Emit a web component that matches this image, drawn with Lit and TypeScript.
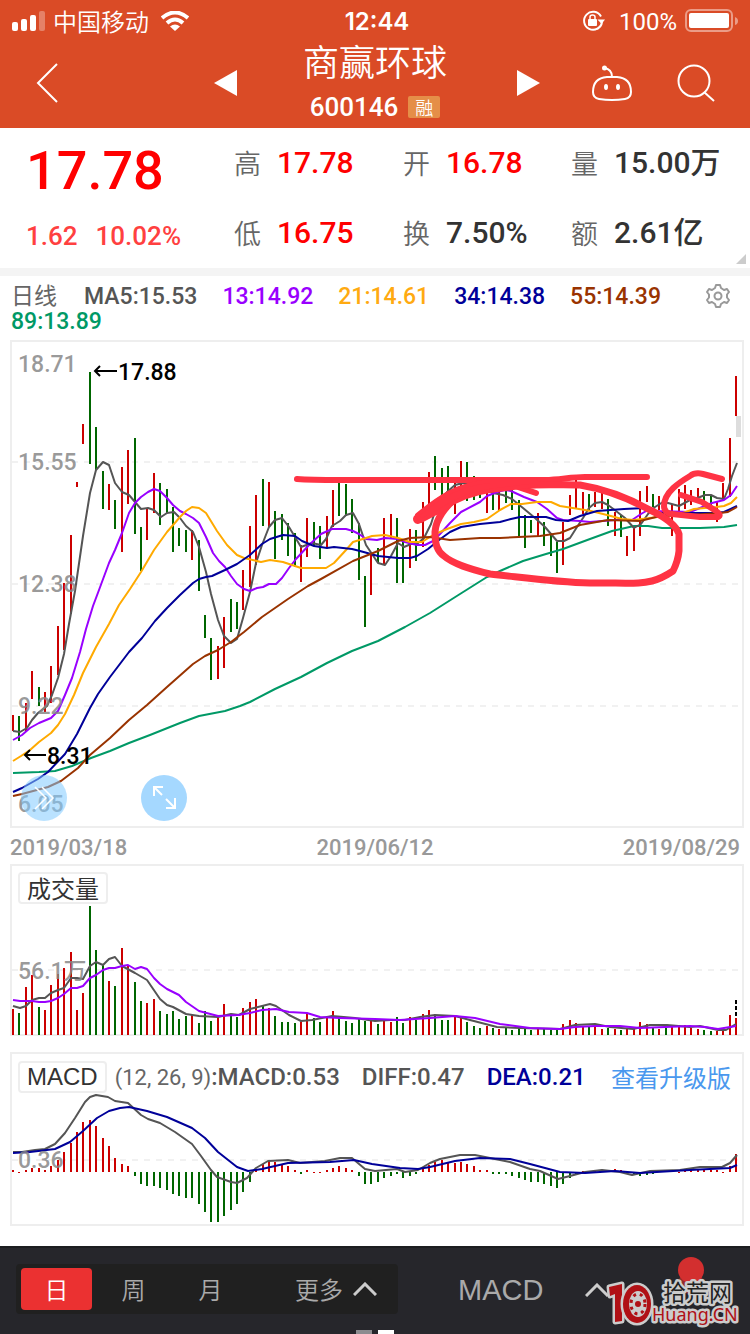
import { LitElement, html, css, svg } from "lit";
import { customElement } from "lit/decorators.js";

type Bar = [string, number, number, number];

// Trading days: direction, high y, low y, top of the volume bar
const DAYS: Bar[] = [
  ["r", 715, 731, 1009], ["g", 716, 741, 1013], ["r", 703, 732, 987], ["r", 671, 699, 975], ["g", 687, 706, 1007],
  ["r", 692, 712, 1010], ["r", 666, 703, 985], ["r", 626, 675, 974], ["r", 583, 650, 968], ["r", 535, 614, 952],
  ["r", 482, 487, 1010], ["r", 424, 444, 993], ["g", 372, 464, 906], ["g", 427, 470, 950], ["g", 471, 509, 964],
  ["r", 484, 510, 981], ["g", 500, 529, 986], ["r", 467, 552, 948], ["r", 450, 504, 966], ["g", 438, 534, 982],
  ["g", 527, 571, 1001], ["r", 509, 540, 1003], ["r", 473, 513, 999], ["g", 483, 525, 1011], ["g", 489, 513, 1014],
  ["g", 507, 552, 1011], ["g", 528, 546, 1019], ["g", 530, 552, 1016], ["r", 530, 560, 1015], ["g", 540, 591, 1023],
  ["g", 615, 638, 1011], ["g", 638, 680, 1021], ["r", 646, 679, 1018], ["r", 617, 668, 1004], ["g", 599, 632, 1016],
  ["g", 602, 629, 1017], ["r", 570, 610, 1008], ["r", 526, 587, 1002], ["r", 495, 565, 999], ["g", 479, 526, 1005],
  ["r", 482, 527, 1008], ["g", 511, 559, 1016], ["g", 514, 540, 1022], ["g", 523, 556, 1022], ["g", 533, 567, 1023],
  ["r", 545, 582, 1022], ["r", 518, 557, 1013], ["g", 522, 546, 1018], ["g", 526, 559, 1022], ["r", 516, 547, 1016],
  ["r", 490, 527, 1011], ["g", 482, 516, 1018], ["g", 484, 516, 1021], ["g", 499, 533, 1023], ["g", 523, 580, 1019],
  ["g", 576, 627, 1021], ["r", 553, 595, 1020], ["g", 548, 563, 1024], ["r", 518, 565, 1021], ["r", 514, 538, 1022],
  ["g", 518, 583, 1017], ["g", 542, 583, 1023], ["r", 529, 568, 1017], ["g", 530, 561, 1020], ["r", 502, 547, 1014],
  ["r", 472, 518, 1010], ["g", 456, 490, 1014], ["g", 468, 497, 1020], ["g", 466, 493, 1020], ["r", 482, 514, 1016],
  ["r", 461, 486, 1018], ["g", 462, 501, 1022], ["g", 476, 500, 1026], ["g", 483, 498, 1028], ["r", 490, 513, 1026],
  ["g", 490, 510, 1028], ["r", 490, 511, 1029], ["g", 488, 503, 1028], ["g", 490, 510, 1030], ["g", 500, 536, 1028],
  ["g", 515, 548, 1028], ["g", 520, 533, 1030], ["r", 513, 536, 1029], ["g", 522, 546, 1029], ["g", 533, 556, 1030],
  ["g", 542, 573, 1030], ["r", 522, 565, 1024], ["r", 495, 515, 1020], ["r", 480, 508, 1023], ["r", 492, 514, 1027],
  ["g", 494, 510, 1027], ["r", 492, 507, 1027], ["r", 493, 509, 1029], ["g", 499, 526, 1028], ["r", 512, 536, 1029],
  ["g", 515, 537, 1030], ["r", 536, 556, 1029], ["r", 527, 551, 1029], ["r", 491, 536, 1022], ["r", 486, 502, 1024],
  ["g", 494, 507, 1028], ["r", 496, 510, 1029], ["g", 505, 515, 1028], ["r", 505, 536, 1027], ["r", 489, 512, 1025],
  ["r", 485, 509, 1025], ["r", 490, 505, 1028], ["r", 488, 500, 1029], ["g", 491, 505, 1030], ["g", 495, 507, 1031],
  ["r", 502, 522, 1031], ["r", 483, 500, 1030], ["r", 438, 497, 1015], ["r", 376, 416, 1018],
];

const MACD_BARS = [
  2, -1, 2, 4, 4, 2, 6, 12, 20, 29, 40, 50, 52, 46, 34, 26, 14, 8, 6, -4, -12, -14, -14, -16, -18, -22, -24, -26, -26,
  -32, -40, -50, -50, -44, -38, -32, -20, -10, 2, 8, 11, 10, 7, 6, 2, -2, 2, -1, -1, 2, 4, 6, 4, 2, -4, -12, -12, -10,
  -6, -4, -2, -6, -4, -2, 3, 7, 10, 12, 10, 9, 10, 8, 6, 2, 2, -2, -2, -2, -4, -6, -8, -10, -10, -12, -14, -16, -12,
  -6, -2, 1, 1, 1, 1, 1, 3, 2, -2, -2, -4, -3, -2, 2, 1, 1, -1, 1, 3, 2, 2, 2, 2, -1, 6, 18,
];

const PRICE_LINES = [
  { color: "#009966", pts: "13,773 39,772 55,771 72,766 91,758 110,751 129,743 150,735 180,723 199,716 225,711 240,706 250,702 275,689 301,677 327,663 352,651 378,641 405,627 430,613 460,594 487,577 500,571 523,561 546,554 563,549 590,539 612,531 634,526 648,526 662,528 700,528 724,527 737,525" },
  { color: "#555555", pts: "13,731 20,732 27,728 32,720 38,713 47,706 52,695 58,678 64,654 69,624 75,591 83,536 90,493 96,470 103,462 109,465 115,483 122,492 129,495 135,502 141,509 148,508 154,510 161,517 167,513 174,512 180,518 186,526 193,532 199,547 206,572 211,594 218,620 224,636 231,643 237,639 243,618 250,592 256,563 262,545 269,527 275,520 282,518 289,527 301,547 312,543 321,545 326,539 332,526 340,521 346,515 353,513 359,524 366,545 378,563 385,565 391,556 398,543 404,547 411,544 417,544 424,538 431,524 437,505 447,492 455,485 463,483 475,484 487,490 493,493 503,495 512,499 523,508 535,518 545,527 557,541 564,541 570,538 577,527 583,518 589,508 595,503 602,502 608,505 616,511 625,518 634,528 641,524 648,514 655,507 663,502 668,503 679,506 690,500 700,497 705,495 711,495 717,498 724,499 728,489 732,476 737,463" },
  { color: "#9900ff", pts: "13,740 22,735 30,728 39,723 51,718 58,711 65,695 72,678 80,652 86,629 93,606 99,590 109,563 115,550 122,533 129,513 135,503 141,497 148,492 154,489 160,491 167,498 173,505 180,511 186,514 193,518 199,523 206,537 213,553 219,561 225,567 231,576 237,584 244,589 250,591 257,588 263,587 269,584 276,584 282,578 289,568 296,559 309,545 321,534 332,529 346,529 353,531 359,534 366,539 377,540 385,538 398,539 405,542 417,545 425,545 433,541 440,534 450,523 461,512 480,502 487,496 497,492 505,490 511,491 524,497 537,502 547,509 557,518 563,520 580,521 590,522 602,521 615,520 632,520 641,514 648,510 657,511 690,512 700,508 712,503 724,500 731,495 737,486" },
  { color: "#ffaa00", pts: "13,761 21,756 30,750 39,742 51,733 58,725 65,714 74,695 83,673 96,647 109,624 119,605 130,589 141,572 154,550 167,532 180,517 186,511 192,507 199,508 206,513 217,531 227,545 237,555 244,558 261,562 270,560 283,562 301,568 326,568 334,563 346,550 353,542 366,538 372,536 385,535 398,538 410,542 422,542 433,535 447,529 461,524 474,522 487,519 500,510 511,504 522,504 537,502 551,502 560,506 579,509 591,511 607,515 622,519 634,520 650,518 680,514 694,509 716,507 724,506 731,503 737,497" },
  { color: "#000099", pts: "13,792 22,788 38,779 48,772 65,754 77,734 90,708 98,694 110,677 129,652 142,638 155,621 167,608 180,595 193,583 199,579 206,577 212,576 225,570 237,564 250,555 262,544 270,539 283,535 295,536 302,541 314,546 327,548 334,547 352,549 360,551 378,556 398,558 410,558 417,556 428,549 439,540 450,532 461,527 480,524 500,522 511,519 520,517 546,517 556,520 568,521 580,516 597,511 624,509 645,508 660,513 682,513 716,513 724,512 737,506" },
  { color: "#993300", pts: "13,796 22,794 48,787 61,781 78,768 90,755 110,738 129,720 147,705 167,687 193,664 205,656 218,650 231,642 244,632 262,617 288,599 308,586 321,579 353,561 378,551 398,541 410,538 430,537 450,540 480,538 500,538 540,536 560,533 580,525 608,520 640,521 660,516 690,515 720,513 728,512 737,507" },
];

const VOLUME_LINES = [
  { color: "#555555", pts: "13,1006 20,1008 26,1006 32,1000 39,998 45,998 51,993 58,990 64,988 71,978 77,978 83,979 90,966 96,962 103,965 109,959 115,957 122,966 135,973 147,980 160,999 167,1005 173,1007 186,1014 199,1016 218,1017 231,1014 239,1015 250,1009 270,1004 276,1006 289,1015 301,1021 312,1020 332,1016 355,1018 375,1021 390,1020 405,1020 420,1017 435,1015 455,1016 470,1020 497,1027 520,1028 560,1029 575,1025 595,1024 610,1027 633,1029 650,1025 667,1025 690,1027 700,1026 718,1030 726,1030 736,1024" },
  { color: "#9900ff", pts: "13,1000 20,1001 32,1001 39,1002 45,1002 51,1001 58,998 64,994 71,988 77,988 83,986 90,978 96,975 103,970 109,968 115,968 122,966 128,965 135,969 141,967 147,969 154,978 160,984 167,989 179,995 186,1002 199,1011 218,1016 238,1015 250,1013 262,1010 276,1009 289,1012 307,1013 320,1017 340,1018 375,1019 400,1020 430,1018 455,1016 475,1018 500,1024 530,1028 560,1029 575,1027 595,1026 620,1026 640,1028 690,1026 705,1027 718,1029 736,1026" },
];

const MACD_LINES = [
  { color: "#555555", pts: "13,1152 22,1152 35,1150 45,1149 55,1144 65,1133 75,1118 85,1102 90,1097 96,1095 108,1097 115,1101 128,1103 141,1115 148,1119 160,1123 175,1132 192,1144 201,1156 211,1170 217,1177 231,1182 237,1183 247,1178 256,1168 268,1161 288,1160 300,1163 325,1161 340,1158 352,1158 365,1169 375,1171 397,1169 405,1172 418,1170 430,1163 440,1159 460,1155 475,1155 495,1159 510,1162 530,1169 540,1171 558,1179 570,1176 585,1172 602,1170 620,1172 632,1175 650,1171 680,1170 700,1167 722,1167 730,1163 737,1155" },
  { color: "#000099", pts: "13,1153 30,1152 55,1149 70,1142 83,1131 97,1118 109,1111 120,1108 129,1107 147,1111 167,1117 192,1128 205,1138 218,1152 237,1167 248,1171 262,1169 288,1163 330,1162 354,1160 372,1164 400,1168 418,1169 430,1167 455,1161 480,1158 510,1159 530,1164 560,1172 585,1173 615,1171 640,1173 690,1170 730,1168 737,1165" },
];

const UP = "#cc0000";
const DOWN = "#006600";
const dayX = (i: number) => Math.round(12 + i * 6.4);

const drawLines = (lines: { color: string; pts: string }[]) =>
  lines.map((l) => svg`<polyline points=${l.pts} fill="none" stroke=${l.color} stroke-width="2" stroke-linejoin="round" />`);

const drawGrid = (ys: number[]) =>
  ys.map((y) => svg`<path d=${`M12 ${y}H738`} stroke="#f1f1f1" stroke-width="2" stroke-dasharray="6 6" />`);

@customElement("price-chart")
export class PriceChart extends LitElement {
  static styles = css`
    :host { display: block; position: relative; border: 2px solid #eeeeee; }
    .plot { display: block; width: 100%; height: auto; overflow: visible; }
    .axis { font: 500 23px Roboto, sans-serif; fill: #888888; fill-opacity: 0.85; }
    .mark { font: 500 23px Roboto, sans-serif; fill: #000000; }
    .tools { position: absolute; left: 9px; bottom: 5px; display: flex; gap: 74px; }
    .tool { width: 46px; height: 46px; padding: 0; border: 0; border-radius: 50%; background: #a5d8ff; }
    .faded { background: rgba(130, 203, 255, 0.55); }
    .tool svg { display: block; }
  `;

  render() {
    return html`
      <svg class="plot" viewBox="12 342 730 484" role="img" aria-label="日线">
        ${drawGrid([462, 584, 706])}
        ${DAYS.map(([dir, top, low], i) => svg`<rect x=${dayX(i)} y=${top} width="2" height=${low - top} fill=${dir === "r" ? UP : DOWN} />`)}
        <rect x="736" y="416" width="5" height="21" fill="#dddddd" />
        ${drawLines(PRICE_LINES)}
        <text class="axis" x="18" y="372">18.71</text>
        <text class="axis" x="18" y="470">15.55</text>
        <text class="axis" x="18" y="592">12.38</text>
        <text class="axis" x="18" y="714">9.22</text>
        <text class="axis" x="18" y="812">6.05</text>
        <text class="mark" x="118" y="380">17.88</text>
        <text class="mark" x="47" y="764">8.31</text>
        <g fill="none" stroke="#000000" stroke-width="2">
          <path d="M117 371H95M100 366L95 371L100 376" />
          <path d="M46 755H25M30 750L25 755L30 760" />
        </g>
        <g fill="none" stroke="#ff3344" stroke-linecap="round" stroke-linejoin="round">
          <path stroke-width="6" d="M297 479C310 480 320 480 340 480H545C560 480 570 477 585 477H647" />
          <path stroke-width="10" d="M418 519C436 504 452 491 480 486C500 483 520 484 536 483" />
          <path stroke-width="6" d="M490 483L512 485L536 493" />
          <path stroke-width="7" d="M490 484C530 486 560 484 580 485C605 489 630 499 650 510C665 517 676 525 679 534V551C678 561 675 567 673 571C667 575 660 579 652 581C640 584 634 583 590 583C555 582 520 577 490 574C470 569 453 564 444 556C437 551 435 544 435 532C436 518 445 508 457 496C466 490 478 486 490 484Z" />
          <path fill="#ff3344" stroke-width="4" d="M417 515C438 498 456 484 490 481H536V485L490 491C468 494 450 504 440 511L421 521Z" />
          <path stroke-width="6" d="M722 479L703 474Q695 472 690 476C680 482 664 492 664 506Q664 513 672 514L700 517H718Q722 515 716 511L702 502L681 495" />
        </g>
      </svg>
      <div class="tools">
        <button class="tool faded" aria-label="收起">
          <svg width="46" height="46" viewBox="0 0 46 46" fill="none" stroke="#ffffff" stroke-width="1.500"><path d="M14 12L25 23L14 34M21 12L32 23L21 34" /></svg>
        </button>
        <button class="tool" aria-label="全屏">
          <svg width="46" height="46" viewBox="0 0 46 46" fill="none" stroke="#ffffff" stroke-width="2"><path d="M13 21V12H22M13 12L21 20M25 24L33 32M34 23V33H25" /></svg>
        </button>
      </div>
    `;
  }
}

@customElement("volume-chart")
export class VolumeChart extends LitElement {
  static styles = css`
    :host { display: block; border: 2px solid #eeeeee; }
    .head { display: flex; padding: 6px 6px 0; }
    .pick {
      height: 32px; padding: 0 7px; border: 2px solid #eeeeee; border-radius: 4px; background: #ffffff;
      color: #333333; font: 24px/26px "Noto Sans CJK SC", sans-serif;
    }
    .plot { display: block; width: 100%; height: auto; overflow: visible; }
    .axis { font: 500 23px Roboto, "Noto Sans CJK SC", sans-serif; fill: #888888; fill-opacity: 0.85; }
  `;

  render() {
    return html`
      <div class="head"><button class="pick">成交量</button></div>
      <svg class="plot" viewBox="12 904 730 130" role="img" aria-label="成交量">
        ${drawGrid([970])}
        ${DAYS.map(([dir, , , top], i) => svg`<rect x=${dayX(i)} y=${top} width="2" height=${1035 - top} fill=${dir === "r" ? UP : DOWN} />`)}
        <path d="M736 1000V1016" stroke="#000000" stroke-width="2" stroke-dasharray="4 2" />
        ${drawLines(VOLUME_LINES)}
        <text class="axis" x="18" y="979">56.1万</text>
      </svg>
    `;
  }
}

@customElement("macd-chart")
export class MacdChart extends LitElement {
  static styles = css`
    :host { display: block; border: 2px solid #eeeeee; }
    .head {
      display: flex; align-items: center; padding: 7px 11px 0 6px; gap: 22px; white-space: nowrap;
      font: 500 24px/32px Roboto, sans-serif; color: #555555;
    }
    .main { display: flex; align-items: center; gap: 8px; }
    .pick {
      height: 32px; padding: 0 7px; border: 2px solid #eeeeee; border-radius: 4px; background: #ffffff;
      color: #333333; font: 24px/28px "Liberation Sans", sans-serif;
    }
    .args { font-weight: 400; font-size: 22px; line-height: 24px; color: #666666; }
    .dea { color: #000099; }
    .more { margin-left: auto; color: #4a98ee; text-decoration: none; font: 24px/32px "Noto Sans CJK SC", sans-serif; }
    .plot { display: block; width: 100%; height: auto; overflow: visible; }
    .axis { font: 500 23px Roboto, sans-serif; fill: #888888; fill-opacity: 0.85; }
  `;

  render() {
    return html`
      <div class="head">
        <div class="main">
          <button class="pick">MACD</button>
          <span><span class="args">(12, 26, 9)</span>:MACD:0.53</span>
        </div>
        <span>DIFF:0.47</span>
        <span class="dea">DEA:0.21</span>
        <a class="more" href="#upgrade">查看升级版</a>
      </div>
      <svg class="plot" viewBox="12 1093 730 131" role="img" aria-label="MACD">
        ${drawGrid([1160])}
        ${MACD_BARS.map((v, i) => svg`<rect x=${dayX(i)} y=${v > 0 ? 1172 - v : 1172} width="2" height=${Math.abs(v)} fill=${v >= -1 ? UP : DOWN} />`)}
        ${drawLines(MACD_LINES)}
        <text class="axis" x="18" y="1168">0.36</text>
      </svg>
    `;
  }
}

@customElement("app-root")
export class AppRoot extends LitElement {
  static styles = css`
    :host {
      display: flex; flex-direction: column; min-height: 100vh; background: #ffffff; color: #333333;
      font-family: Roboto, "Noto Sans CJK SC", sans-serif;
    }
    * { box-sizing: border-box; }
    button { border: 0; padding: 0; background: none; color: inherit; font: inherit; }
    svg { display: block; }
    .top { background: #da4b26; color: #ffffff; }
    .status { display: grid; grid-template-columns: 1fr auto 1fr; align-items: center; height: 40px; padding: 0 12px; font-size: 24px; line-height: 40px; }
    .carrier { display: flex; align-items: center; gap: 8px; font-family: "Noto Sans CJK SC", sans-serif; font-weight: 350; line-height: 36px; }
    .wifi { margin-left: 4px; }
    .clock { font-weight: 600; font-family: Inter, sans-serif; padding: 2px 0 0 4px; }
    .power { display: flex; align-items: center; justify-content: flex-end; gap: 8px; }
    .percent { margin-left: 6px; padding-top: 2px; }
    .nav { display: grid; grid-template-columns: 1fr 144px 1fr; height: 88px; }
    .side { display: flex; align-items: center; justify-content: space-between; }
    .before { padding: 0 65px 2px 36px; }
    .after { padding: 0 35px 2px 70px; }
    .stock { display: flex; flex-direction: column; align-items: center; white-space: nowrap; }
    .name { margin: 0; font: 350 36px/40px "Noto Sans CJK SC", sans-serif; }
    .code { display: flex; align-items: center; gap: 10px; padding-top: 6px; font-size: 26px; line-height: 42px; font-weight: 500; }
    .tag { padding: 0 7px; border-radius: 2px; background: #e58e48; font: 350 18px/22px "Noto Sans CJK SC", sans-serif; }
    .quote { position: relative; display: grid; grid-template-columns: 234fr 169fr 168fr 179fr; grid-template-rows: 70px 70px; border-bottom: 8px solid #f4f4f4; box-sizing: content-box; }
    .last { grid-row: span 2; padding: 15px 0 0 26px; color: #ff0000; }
    .price { font-size: 54px; line-height: 56px; font-weight: 500; }
    .change { display: flex; gap: 18px; color: #ff4040; font-size: 26px; line-height: 74px; font-weight: 500; }
    .stat { display: flex; align-items: center; gap: 16px; margin: 0; font-size: 30px; line-height: 40px; font-weight: 500; white-space: nowrap; }
    .label { font: 350 27px/40px "Noto Sans CJK SC", sans-serif; color: #666666; }
    .hot { color: #ff0000; }
    .corner { position: absolute; right: 4px; bottom: 4px; }
    .averages { display: flex; padding: 8px 19px 6px 11px; }
    .list { flex: 1; display: flex; flex-wrap: wrap; column-gap: 25px; font-size: 23px; line-height: 25px; font-weight: 500; }
    .period { color: #666666; font-weight: 400; margin-right: 2px; }
    .gear { height: 22px; }
    .ma5 { color: #555555; } .ma13 { color: #9900ff; } .ma21 { color: #ffaa11; }
    .ma34 { color: #000099; } .ma55 { color: #993300; } .ma89 { color: #009966; }
    .charts { padding: 0 6px 20px 10px; }
    .dates { display: flex; justify-content: space-between; padding: 4px 4px 0 0; color: #999999; font-size: 22px; line-height: 32px; font-weight: 500; }
    .volume { margin-bottom: 16px; }
    .tabs { position: relative; display: flex; align-items: flex-start; margin-top: auto; height: 88px; padding: 16px 16px 0; border-top: 2px solid #1c1d1f; background: #26262b; color: #aaaaaa; font: 350 24px/42px "Noto Sans CJK SC", sans-serif; overflow: hidden; }
    .segment { display: flex; gap: 6px; width: 382px; height: 50px; padding: 4px 5px; border-radius: 4px; background: #202020; }
    .tab { width: 71px; height: 42px; border-radius: 4px; }
    .on { background: #eb3131; color: #ffffff; }
    .wide { display: flex; align-items: center; justify-content: flex-end; gap: 10px; flex: 1; padding-right: 16px; }
    .index { display: flex; align-items: center; gap: 42px; margin-left: 60px; height: 50px; padding-top: 2px; font: 29px/50px "Liberation Sans", sans-serif; }
    .dots { position: absolute; left: 0; right: 0; bottom: 0; display: flex; justify-content: center; gap: 6px; }
    .dot { width: 16px; height: 4px; background: #8c8c90; }
    .now { background: #ffffff; }
    .badge { position: absolute; right: 46px; top: 9px; width: 26px; height: 26px; border-radius: 50%; background: #d32f2f; box-shadow: 0 12px 0 -1px #902a2c; }
    .stamp { position: absolute; right: 4px; bottom: 3px; overflow: visible; }
    .zh { font: 400 23px "Noto Sans CJK SC", sans-serif; fill: #222222; }
    .en { font: 400 18px "Noto Sans", sans-serif; fill: #b01015; }
    .edge { stroke: #cccccc; stroke-width: 5px; stroke-linejoin: round; paint-order: stroke; }
  `;

  private stat(label: string, value: string, hot = false) {
    return html`<div class="stat"><span class="label">${label}</span><span class=${hot ? "hot" : ""}>${value}</span></div>`;
  }

  render() {
    return html`
      <header class="top">
        <div class="status">
          <div class="carrier">
            <svg width="33" height="20" viewBox="0 0 33 20" fill="#ffffff">
              <rect x="0" y="11" width="6" height="9" rx="2" /><rect x="9" y="8" width="6" height="12" rx="2" />
              <rect x="18" y="4" width="6" height="16" rx="2" /><rect x="27" y="0" width="6" height="20" rx="2" opacity="0.3" />
            </svg>
            <span>中国移动</span>
            <svg class="wifi" width="28" height="20" viewBox="0 0 28 20" fill="none" stroke="#ffffff" stroke-width="4">
              <path d="M1 7Q14 -4 27 7" /><path d="M6 12Q14 5 22 12" /><path d="M9 15.500Q14 11.500 19 15.500L14 20Z" fill="#ffffff" stroke="none" />
            </svg>
          </div>
          <div class="clock">12:44</div>
          <div class="power">
            <svg width="23" height="22" viewBox="0 0 23 22" fill="none" stroke="#ffffff" stroke-width="2">
              <path d="M20 12A9 9 0 1 1 19 6.500M17 17.500A9 9 0 0 1 15 19" /><path d="M15.500 9.500H23L19.500 14Z" fill="#ffffff" stroke="none" />
              <rect x="6" y="9" width="9" height="7" rx="1" fill="#ffffff" stroke="none" /><path d="M8 10V7Q8 5 10.500 5T13 7V10" stroke-width="1.500" />
            </svg>
            <span class="percent">100%</span>
            <svg width="53" height="24" viewBox="0 0 53 24">
              <rect x="1" y="1" width="46" height="21" rx="5" fill="none" stroke="#ffffff" stroke-opacity="0.45" stroke-width="2" />
              <rect x="4" y="4" width="40" height="15" rx="2" fill="#ffffff" /><path d="M50 8Q53 9 53 12T50 16Z" fill="#ffffff" fill-opacity="0.45" />
            </svg>
          </div>
        </div>
        <nav class="nav">
          <div class="side before">
            <button aria-label="返回"><svg width="24" height="42" viewBox="0 0 24 42" fill="none" stroke="#ffffff" stroke-width="2"><path d="M21 2L2 21L21 40" /></svg></button>
            <button aria-label="上一只"><svg width="24" height="26" viewBox="0 0 24 26" fill="#ffffff"><path d="M0 13L23 0V26Z" /></svg></button>
          </div>
          <div class="stock">
            <h1 class="name">商赢环球</h1>
            <div class="code"><span>600146</span><span class="tag">融</span></div>
          </div>
          <div class="side after">
            <button aria-label="下一只"><svg width="30" height="26" viewBox="0 0 30 26" fill="#ffffff"><path d="M23 13L0 0V26Z" /></svg></button>
            <button aria-label="助手">
              <svg width="40" height="36" viewBox="0 0 40 36" fill="none" stroke="#ffffff" stroke-width="2">
                <path d="M12 3Q20 4 20 12M15 12H25Q39 13 39 27Q39 33 33 34Q20 36 7 34Q1 33 1 27Q1 13 15 12Z" />
                <circle cx="12.500" cy="3" r="2.500" fill="#ffffff" stroke="none" /><ellipse cx="14" cy="22" rx="2" ry="3" fill="#ffffff" stroke="none" /><ellipse cx="26" cy="22" rx="2" ry="3" fill="#ffffff" stroke="none" />
              </svg>
            </button>
            <button aria-label="搜索"><svg width="38" height="38" viewBox="0 0 38 38" fill="none" stroke="#ffffff" stroke-width="2"><circle cx="17" cy="17" r="15.500" /><path d="M27 28L37 37" /></svg></button>
          </div>
        </nav>
      </header>
      <section class="quote">
        <div class="last">
          <div class="price">17.78</div>
          <div class="change"><span>1.62</span><span>10.02%</span></div>
        </div>
        ${this.stat("高", "17.78", true)} ${this.stat("开", "16.78", true)} ${this.stat("量", "15.00万")}
        ${this.stat("低", "16.75", true)} ${this.stat("换", "7.50%")} ${this.stat("额", "2.61亿")}
        <svg class="corner" width="10" height="10" viewBox="0 0 10 10" fill="#cccccc"><path d="M10 0V10H0Z" /></svg>
      </section>
      <section class="averages">
        <div class="list">
          <span class="period">日线</span><span class="ma5">MA5:15.53</span><span class="ma13">13:14.92</span>
          <span class="ma21">21:14.61</span><span class="ma34">34:14.38</span><span class="ma55">55:14.39</span><span class="ma89">89:13.89</span>
        </div>
        <button class="gear" aria-label="设置">
          <svg width="26" height="24" viewBox="0 0 26 24" fill="none" stroke="#999999" stroke-width="2" stroke-linejoin="round">
            <path d="M10 4L11 1H15L16 4L19 6L22 5L24 8L22 10.500V13.500L24 16L22 19L19 18L16 20L15 23H11L10 20L7 18L4 19L2 16L4 13.500V10.500L2 8L4 5L7 6Z" /><circle cx="13" cy="12" r="3.500" />
          </svg>
        </button>
      </section>
      <main class="charts">
        <price-chart></price-chart>
        <div class="dates"><span>2019/03/18</span><span>2019/06/12</span><span>2019/08/29</span></div>
        <volume-chart class="volume"></volume-chart>
        <macd-chart></macd-chart>
      </main>
      <footer class="tabs">
        <div class="segment">
          <button class="tab on">日</button><button class="tab">周</button><button class="tab">月</button>
          <button class="wide">更多<svg width="24" height="14" viewBox="0 0 24 14" fill="none" stroke="#cccccc" stroke-width="3"><path d="M1 13L12 2L23 13" /></svg></button>
        </div>
        <button class="index">MACD<svg width="24" height="14" viewBox="0 0 24 14" fill="none" stroke="#cccccc" stroke-width="3"><path d="M1 13L12 2L23 13" /></svg></button>
        <span class="badge"></span>
        <svg class="stamp" width="140" height="50" viewBox="606 1281 140 50">
          <g fill="#b01015" stroke="#cccccc" stroke-width="5" stroke-linejoin="round" paint-order="stroke">
            <path d="M609 1287L622 1284V1321L615 1322V1294L610 1296Z" />
            <ellipse cx="637" cy="1304" rx="14" ry="19" />
          </g>
          <ellipse cx="638" cy="1304" rx="9" ry="13" fill="#cccccc" />
          <ellipse cx="638" cy="1304" rx="7" ry="10" fill="none" stroke="#b01015" stroke-width="3" stroke-dasharray="3 4" />
          <ellipse cx="638" cy="1304" rx="5" ry="7" fill="#cccccc" />
          <circle cx="638" cy="1304" r="3" fill="#b01015" />
          <text class="zh edge" x="663" y="1301">拾荒网</text>
          <text class="en edge" x="652" y="1321">Huang.CN</text>
        </svg>
        <div class="dots"><span class="dot"></span><span class="dot now"></span></div>
      </footer>
    `;
  }
}
